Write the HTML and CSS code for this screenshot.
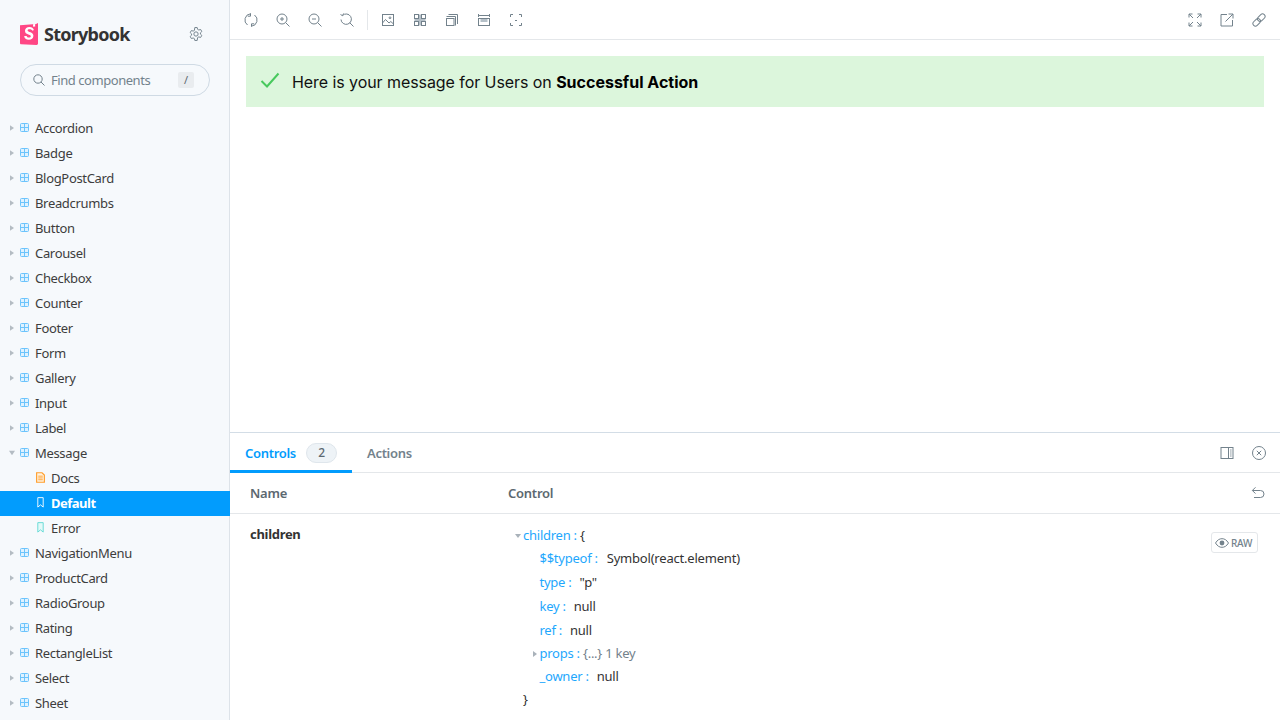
FILE: index.html
```html
<!DOCTYPE html>
<html lang="en">
<head>
<meta charset="utf-8">
<title>Storybook</title>
<link rel="stylesheet" href="styles.css">
</head>
<body>
<svg class="defs" width="0" height="0">
  <symbol id="comp" viewBox="0 0 9 9"><rect x=".5" y=".5" width="8" height="8" rx="1" fill="#dff2ff" stroke="#6cc4fc"/><path d="M4.500 .5v8M.5 4.500h8" stroke="#6cc4fc" fill="none"/></symbol>
  <symbol id="arrow" viewBox="0 0 5 7"><path d="M0 0l5 3.500L0 7z" fill="#b4bcc3"/></symbol>
</svg>
<div class="app">
  <aside class="sidebar">
    <div class="brand">
      <svg class="logo" viewBox="0 0 18 22"><path d="M0 2.200 16 1l2-1v20.600c0 .8-.6 1.400-1.400 1.400L1.200 21.300C.5 21.300 0 20.700 0 20z" fill="#ff4785"/><path d="M13 1.200l2.200-.2-.1 3-1-.8-1 .8z" fill="#fff"/><path d="M12.400 7.700c-.4-1-1.300-1.500-2.800-1.500-1.300 0-2 .5-2 1.300 0 2 5.800.9 5.800 5.300 0 2.500-2 3.900-4.500 3.900-2.800 0-4.500-1.200-4.700-3.700l2.500-.1c.1 1.100 1 1.700 2.200 1.700 1.200 0 1.900-.5 1.900-1.400 0-2.100-5.800-1-5.800-5.400 0-2.300 1.900-3.800 4.400-3.800 2.400 0 3.900 1 4.500 3z" fill="#fff"/></svg>
      <span class="brand-name">Storybook</span>
      <svg class="gear" viewBox="0.5 0.5 13 13"><path d="M5.900 1h2.200l.4 1.700 1.100.6 1.700-.5 1.100 1.900-1.300 1.200v1.200l1.300 1.200-1.100 1.900-1.700-.5-1.100.6L8.100 13H5.900l-.4-1.700-1.100-.6-1.700.5-1.100-1.900 1.300-1.200V6.900L1.600 5.700l1.100-1.900 1.700.5 1.100-.6z" fill="none" stroke="#73828c" stroke-width=".9" stroke-linejoin="round"/><circle cx="7" cy="7" r="2" fill="none" stroke="#73828c" stroke-width=".9"/></svg>
    </div>
    <div class="search">
      <svg class="search-icon" viewBox="0 0 12 12"><circle cx="5" cy="5" r="4.200" fill="none" stroke="#73828c"/><path d="M8 8l3.500 3.500" stroke="#73828c" fill="none"/></svg>
      <span class="search-text">Find components</span>
      <kbd class="key">/</kbd>
    </div>
    <ul class="tree">
      <li class="row"><svg class="arrow"><use href="#arrow"/></svg><svg class="cicon"><use href="#comp"/></svg>Accordion</li>
      <li class="row"><svg class="arrow"><use href="#arrow"/></svg><svg class="cicon"><use href="#comp"/></svg>Badge</li>
      <li class="row"><svg class="arrow"><use href="#arrow"/></svg><svg class="cicon"><use href="#comp"/></svg>BlogPostCard</li>
      <li class="row"><svg class="arrow"><use href="#arrow"/></svg><svg class="cicon"><use href="#comp"/></svg>Breadcrumbs</li>
      <li class="row"><svg class="arrow"><use href="#arrow"/></svg><svg class="cicon"><use href="#comp"/></svg>Button</li>
      <li class="row"><svg class="arrow"><use href="#arrow"/></svg><svg class="cicon"><use href="#comp"/></svg>Carousel</li>
      <li class="row"><svg class="arrow"><use href="#arrow"/></svg><svg class="cicon"><use href="#comp"/></svg>Checkbox</li>
      <li class="row"><svg class="arrow"><use href="#arrow"/></svg><svg class="cicon"><use href="#comp"/></svg>Counter</li>
      <li class="row"><svg class="arrow"><use href="#arrow"/></svg><svg class="cicon"><use href="#comp"/></svg>Footer</li>
      <li class="row"><svg class="arrow"><use href="#arrow"/></svg><svg class="cicon"><use href="#comp"/></svg>Form</li>
      <li class="row"><svg class="arrow"><use href="#arrow"/></svg><svg class="cicon"><use href="#comp"/></svg>Gallery</li>
      <li class="row"><svg class="arrow"><use href="#arrow"/></svg><svg class="cicon"><use href="#comp"/></svg>Input</li>
      <li class="row"><svg class="arrow"><use href="#arrow"/></svg><svg class="cicon"><use href="#comp"/></svg>Label</li>
      <li class="row"><svg class="arrow open"><use href="#arrow"/></svg><svg class="cicon"><use href="#comp"/></svg>Message</li>
      <li class="row sub"><svg class="sicon" viewBox="0 0 10 12"><path d="M.7.700h6l2.600 2.600v8H.7z" fill="#fff3e0" stroke="#ff9e2c" stroke-width="1.300"/><path d="M2.500 4.500h5M2.500 6.500h5M2.500 8.500h5" stroke="#ff9e2c" fill="none"/></svg>Docs</li>
      <li class="row sub selected"><svg class="sicon" viewBox="0 0 10 12"><path d="M2 .6h6v10.500L5 8.600l-3 2.500z" fill="none" stroke="#fff"/></svg>Default</li>
      <li class="row sub"><svg class="sicon" viewBox="0 0 10 12"><path d="M2 .6h6v10.500L5 8.600l-3 2.500z" fill="#e4f9f8" stroke="#5fd9d4"/></svg>Error</li>
      <li class="row"><svg class="arrow"><use href="#arrow"/></svg><svg class="cicon"><use href="#comp"/></svg>NavigationMenu</li>
      <li class="row"><svg class="arrow"><use href="#arrow"/></svg><svg class="cicon"><use href="#comp"/></svg>ProductCard</li>
      <li class="row"><svg class="arrow"><use href="#arrow"/></svg><svg class="cicon"><use href="#comp"/></svg>RadioGroup</li>
      <li class="row"><svg class="arrow"><use href="#arrow"/></svg><svg class="cicon"><use href="#comp"/></svg>Rating</li>
      <li class="row"><svg class="arrow"><use href="#arrow"/></svg><svg class="cicon"><use href="#comp"/></svg>RectangleList</li>
      <li class="row"><svg class="arrow"><use href="#arrow"/></svg><svg class="cicon"><use href="#comp"/></svg>Select</li>
      <li class="row"><svg class="arrow"><use href="#arrow"/></svg><svg class="cicon"><use href="#comp"/></svg>Sheet</li>
    </ul>
  </aside>
  <main class="main">
    <div class="toolbar">
      <span class="tbtn"><svg viewBox="0 0 14 14"><path d="M3.500 12A6.200 6.200 0 0 1 6.500 .8M6.500 .3V3.200H3.800M10.500 2A6.200 6.200 0 0 1 7.500 13.200M7.500 13.700V10.800H10.200"/></svg></span>
      <span class="tbtn"><svg viewBox="0 0 14 14"><circle cx="6" cy="6" r="5"/><path d="M9.700 9.700 13.500 13.500M4 6h4M6 4v4"/></svg></span>
      <span class="tbtn"><svg viewBox="0 0 14 14"><circle cx="6" cy="6" r="5"/><path d="M9.700 9.700 13.500 13.500M4 6h4"/></svg></span>
      <span class="tbtn"><svg viewBox="0 0 14 14"><path d="M2.500 2.500A5.200 5.200 0 1 1 1 6.500M9.700 9.700 13.500 13.500M.5 1.500l2 1.200L3.500.5"/></svg></span>
      <span class="tsep"></span>
      <span class="tbtn"><svg viewBox="0 0 14 14"><rect x="1.500" y="1.500" width="11" height="11"/><path d="M1.500 10l3-3.500L8 10l1.800-1.500 2.700 2.500"/><circle cx="9" cy="4.800" r=".9"/></svg></span>
      <span class="tbtn"><svg viewBox="0 0 14 14"><path class="tone" d="M5.500 1.500h3v4h4v3h-4v4h-3v-4h-4v-3h4z"/><rect x="1.500" y="1.500" width="4" height="4"/><rect x="8.500" y="1.500" width="4" height="4"/><rect x="1.500" y="8.500" width="4" height="4"/><rect x="8.500" y="8.500" width="4" height="4"/></svg></span>
      <span class="tbtn"><svg viewBox="0 0 14 14"><rect x="1.500" y="5.500" width="7.500" height="7"/><path d="M1.500 3.500H10.500V12.500M3.500 1.500H12.500V11"/></svg></span>
      <span class="tbtn"><svg viewBox="0 0 14 14"><path d="M1.500 2.500h11M1.500 1v3M12.500 1v3"/><path class="tone" d="M3.500 6h7v3h-7z"/><rect x="1.500" y="5.500" width="11" height="7"/></svg></span>
      <span class="tbtn"><svg viewBox="0 0 14 14"><path d="M1.500 4V1.500H4M10 1.500h2.500V4M12.500 10v2.500H10M4 12.500H1.500V10M6 7.500h2"/></svg></span>
      <span class="tspace"></span>
      <span class="tbtn"><svg viewBox="0 0 14 14"><path d="M1 1l4 4M13 1 9 5M1 13l4-4M13 13 9 9M1 4.500V1h3.500M9.500 1H13v3.500M13 9.500V13H9.500M4.500 13H1V9.500"/></svg></span>
      <span class="tbtn"><svg viewBox="0 0 14 14"><path d="M7 1.500H1V13h11.500V7M5.500 8.500 13 1M8.500 1H13v4.500"/></svg></span>
      <span class="tbtn"><svg viewBox="0 0 14 14"><g transform="rotate(-45 7 7)"><rect x="-.5" y="4.500" width="8.500" height="5" rx="2.500"/><rect x="6" y="4.500" width="8.500" height="5" rx="2.500"/></g></svg></span>
    </div>
    <section class="preview">
      <div class="banner">
        <svg class="check" viewBox="0 0 20 16"><path d="M1.500 9l5.500 5.500L18.500 1.500" fill="none" stroke="#47c95d" stroke-width="2"/></svg>
        <p class="msg">Here is your message for Users on <b>Successful Action</b></p>
      </div>
    </section>
    <section class="panel">
      <div class="tabs">
        <div class="tab active">Controls <span class="count">2</span></div>
        <div class="tab">Actions</div>
        <span class="tspace"></span>
        <span class="tbtn"><svg viewBox="0 0 14 14"><rect x="1" y="1.500" width="12" height="11"/><path d="M8.500 1.500v11M10.200 4h1.300M10.200 6h1.300M10.200 8h1.300M10.200 10h1.300"/></svg></span>
        <span class="tbtn"><svg viewBox="0 0 14 14"><circle cx="7" cy="7" r="6.500"/><path d="M4.800 4.800l4.400 4.400M9.200 4.800 4.800 9.200"/></svg></span>
      </div>
      <div class="thead">
        <span class="col-name">Name</span>
        <span class="col-control">Control</span>
        <svg class="undo" viewBox="0 0 14 12"><path d="M1.500 4h8a3.500 3.500 0 0 1 0 7H3M4.500 .8 1.300 4l3.200 3" transform="translate(0 -.5)"/></svg>
      </div>
      <div class="trow">
        <div class="col-name prop">children</div>
        <div class="json">
          <div class="jline"><i class="jcaret down"></i><span class="k">children :</span> <span class="v">{</span></div>
          <div class="jline in"><span class="k">$$typeof :</span><span class="v gap wide">Symbol(react.element)</span></div>
          <div class="jline in"><span class="k">type :</span><span class="v gap">"p"</span></div>
          <div class="jline in"><span class="k">key :</span><span class="v gap">null</span></div>
          <div class="jline in"><span class="k">ref :</span><span class="v gap">null</span></div>
          <div class="jline in"><i class="jcaret"></i><span class="k">props :</span> <span class="m">{...} 1 key</span></div>
          <div class="jline in"><span class="k">_owner :</span><span class="v gap">null</span></div>
          <div class="jline"><span class="v">}</span></div>
        </div>
        <div class="raw"><svg viewBox="0 0 14 10"><path d="M.5 5C2.500 1.800 4.500.7 7 .7s4.500 1.100 6.500 4.300c-2 3.200-4 4.300-6.500 4.300S2.500 8.200.5 5z" fill="none" stroke="#73828c"/><circle cx="7" cy="5" r="2.400" fill="#73828c"/></svg>RAW</div>
      </div>
    </section>
  </main>
</div>
</body>
</html>
```

FILE: styles.css
```css
* { box-sizing: border-box; }
html, body { margin: 0; height: 100%; overflow: hidden; }
body { font-family: "Noto Sans", "Open Sans", sans-serif; font-size: 13px; color: #333; background: #fff; }
.defs { display: block; height: 0; }
.app { display: flex; width: 1280px; height: 720px; overflow: hidden; }

.sidebar { width: 230px; flex: none; height: 720px; background: #f6f9fc; box-shadow: inset -1px 0 0 #dde3e9; overflow: hidden; padding-top: 23px; }
.brand { display: flex; align-items: center; height: 22px; padding-left: 20px; }
.logo { width: 18px; height: 22px; flex: none; }
.brand-name { margin-left: 6px; font-size: 18px; font-weight: 700; color: #333; letter-spacing: -.75px; line-height: 22px; }
.gear { width: 14px; height: 14px; margin-left: auto; margin-right: 27px; }
.search { display: flex; align-items: center; height: 32px; margin: 19px 20px 0; padding-left: 12px; border: 1px solid #cfdae4; border-radius: 16px; }
.search-icon { width: 12px; height: 12px; flex: none; }
.search-text { margin-left: 6px; font-size: 13px; color: #73828c; letter-spacing: -.45px; }
.key { margin-left: auto; margin-right: 15px; width: 16px; height: 16px; background: #e9ecef; border-radius: 2px; font-family: "Noto Sans", sans-serif; font-size: 11px; line-height: 16px; text-align: center; color: #5c6870; }

.tree { list-style: none; margin: 20px 0 0; padding: 0; }
.row { display: flex; align-items: center; height: 25px; padding: 0 0 2px 10px; font-size: 13px; color: #3d3d3d; letter-spacing: -.33px; white-space: nowrap; }
.arrow { width: 4px; height: 6px; flex: none; margin-right: 6px; }
.arrow.open { width: 6px; height: 6px; margin-left: -1px; margin-right: 5px; transform: rotate(90deg); }
.cicon { width: 9px; height: 9px; flex: none; margin-right: 6px; }
.sub { padding-left: 36px; }
.sicon { width: 9px; height: 11px; flex: none; margin-right: 6px; }
.selected { background: #029cfd; color: #fff; font-weight: 700; letter-spacing: -.5px; }

.main { flex: 1; min-width: 0; display: flex; flex-direction: column; }
.toolbar { display: flex; align-items: center; height: 40px; flex: none; padding: 0 5px; border-bottom: 1px solid #e4e7ea; }
.tbtn { width: 32px; height: 14px; flex: none; display: flex; justify-content: center; }
.tbtn svg { width: 14px; height: 14px; fill: none; stroke: #73828c; stroke-width: 1; }
.tbtn .tone { fill: #b5c0c8; stroke: none; }
.tsep { width: 1px; height: 20px; background: #e4e7ea; margin: 0 4px; }
.tspace { flex: 1; }

.preview { flex: 1; min-height: 0; padding: 16px; }
.banner { display: flex; align-items: flex-start; height: 51px; background: #dcf6dc; padding-left: 14px; }
.check { width: 20px; height: 16px; margin-top: 16px; flex: none; }
.msg { margin: 17px 0 0 12px; font-family: Inter, sans-serif; font-size: 16px; line-height: 19px; color: #111; letter-spacing: -.07px; }
.msg b { font-weight: 700; color: #000; letter-spacing: 0; }

.panel { flex: none; height: 288px; border-top: 1px solid #d3dde6; overflow: hidden; }
.tabs { display: flex; align-items: center; height: 40px; padding-right: 5px; border-bottom: 1px solid #e4e7ea; }
.tab { display: flex; align-items: center; height: 40px; padding: 0 15px; font-size: 13px; font-weight: 600; color: #73828c; letter-spacing: -.3px; }
.tab.active { color: #029cfd; border-bottom: 3px solid #029cfd; padding-top: 3px; }
.count { display: inline-block; margin-left: 10px; width: 31px; height: 20px; line-height: 18px; border: 1px solid #dfe6ec; border-radius: 10px; background: #eef3f7; color: #5c6870; font-size: 12px; text-align: center; font-weight: 500; }
.thead { display: flex; align-items: center; height: 41px; padding: 0 15px 0 20px; border-bottom: 1px solid #e4e7ea; color: #5c6870; font-weight: 600; letter-spacing: -.25px; }
.col-name { width: 258px; flex: none; }
.undo { width: 14px; height: 12px; margin-left: auto; fill: none; stroke: #73828c; }
.trow { display: flex; padding: 10px 22px 0 20px; }
.prop { font-weight: 700; color: #333; line-height: 21px; letter-spacing: -.3px; }
.json { flex: 1; margin-top: -1px; padding-left: 15px; letter-spacing: -.25px; }
.jline { height: 23px; line-height: 24px; white-space: pre; }
.jline:nth-child(2), .jline:nth-child(3), .jline:nth-child(4) { height: 24px; }
.jline.in { padding-left: 16.500px; }
.jcaret { display: inline-block; width: 0; height: 0; border-style: solid; border-width: 3px 0 3px 4px; border-color: transparent transparent transparent #a9b2ba; margin-left: -7px; margin-right: 3px; vertical-align: 1px; }
.jcaret.down { border-width: 4px 3px 0; border-color: #a9b2ba transparent transparent; margin-left: -8px; margin-right: 2px; vertical-align: 2px; }
.k { color: #1ea7fd; }
.v { color: #333; }
.gap { margin-left: 8px; }
.wide { margin-left: 9px; letter-spacing: -.2px; }
.m { color: #73828c; }
.raw { display: flex; align-items: center; gap: 2px; align-self: flex-start; margin-top: 8px; height: 21px; width: 47px; padding: 0 2px 0 3px; border: 1px solid #e4e7ea; border-radius: 3px; font-size: 10px; font-weight: 500; color: #73828c; letter-spacing: -.25px; white-space: nowrap; }
.raw svg { width: 14px; height: 10px; flex: none; }
```
